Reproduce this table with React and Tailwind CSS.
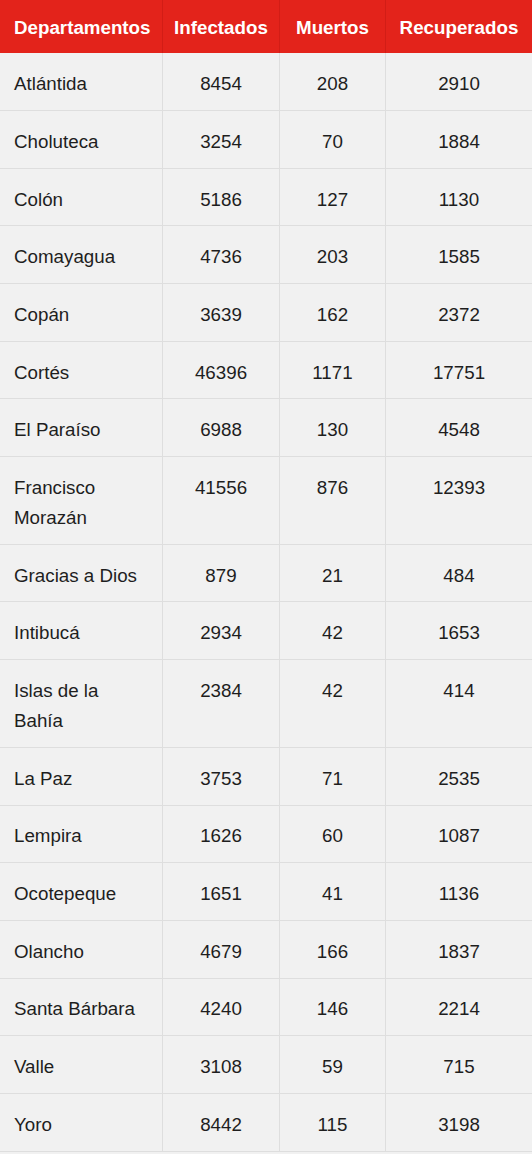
import React from "react";

const rows = [
  ["Atlántida", "8454", "208", "2910"],
  ["Choluteca", "3254", "70", "1884"],
  ["Colón", "5186", "127", "1130"],
  ["Comayagua", "4736", "203", "1585"],
  ["Copán", "3639", "162", "2372"],
  ["Cortés", "46396", "1171", "17751"],
  ["El Paraíso", "6988", "130", "4548"],
  ["Francisco Morazán", "41556", "876", "12393"],
  ["Gracias a Dios", "879", "21", "484"],
  ["Intibucá", "2934", "42", "1653"],
  ["Islas de la Bahía", "2384", "42", "414"],
  ["La Paz", "3753", "71", "2535"],
  ["Lempira", "1626", "60", "1087"],
  ["Ocotepeque", "1651", "41", "1136"],
  ["Olancho", "4679", "166", "1837"],
  ["Santa Bárbara", "4240", "146", "2214"],
  ["Valle", "3108", "59", "715"],
  ["Yoro", "8442", "115", "3198"],
];

const headers = ["Departamentos", "Infectados", "Muertos", "Recuperados"];

export default function App() {
  return (
    <div className="w-[532px] min-h-screen bg-[#f1f1f1] font-['Liberation_Sans',Arial,sans-serif] text-[18.75px] overflow-hidden">
      <div className="grid grid-cols-[163px_117px_106px_146px]">
        {headers.map((h, i) => (
          <div
            key={h}
            className={
              "h-[53.3px] pt-[2px] flex items-center bg-[#e3231b] text-white font-bold whitespace-nowrap " +
              (i === 0 ? "pl-[14px] " : "justify-center ") +
              (i < 3 ? "border-r border-[#d21d16]" : "")
            }
          >
            {h}
          </div>
        ))}
        {rows.map((r) =>
          r.map((c, i) => (
            <div
              key={r[0] + i}
              className={
                "bg-[#f1f1f1] text-[#1e1e1e] leading-[30px] pt-[15.85px] pb-[10.85px] border-b border-[#dedede] " +
                (i === 0 ? "pl-[14px] pr-[14px] " : "text-center ") +
                (i < 3 ? "border-r" : "")
              }
            >
              {c}
            </div>
          ))
        )}
      </div>
    </div>
  );
}
